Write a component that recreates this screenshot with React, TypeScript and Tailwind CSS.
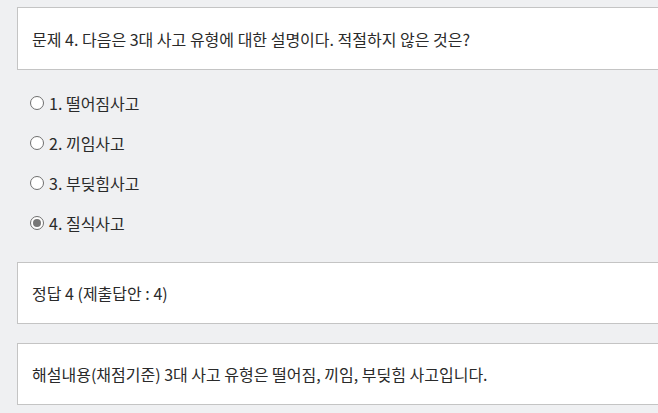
import React from "react";

const font = { fontFamily: '"Noto Sans CJK KR", "Noto Sans", sans-serif' };

function Radio({ checked }: { checked?: boolean }) {
  return (
    <span className="flex h-[14px] w-[14px] items-center justify-center rounded-full border border-[#6f6f6f] bg-white">
      {checked && <span className="h-[8px] w-[8px] rounded-full bg-[#777777]" />}
    </span>
  );
}

export default function App() {
  const options = ["1. 떨어짐사고", "2. 끼임사고", "3. 부딪힘사고", "4. 질식사고"];
  return (
    <div className="h-[413px] w-[658px] overflow-hidden bg-[#eff0f2] pt-[7px] pl-[17px] text-[16px] tracking-[0px] text-[#2a2a2a]" style={font}>
      <div className="flex h-[63px] w-[700px] items-center border border-[#c4c4c4] bg-white pl-[14px]">
        문제 4. 다음은 3대 사고 유형에 대한 설명이다. 적절하지 않은 것은?
      </div>
      <div className="mt-[13px] flex flex-col">
        {options.map((o, i) => (
          <div key={o} className="flex h-[40px] items-center gap-[5px] pl-[13px]">
            <Radio checked={i === 3} />
            <span>{o}</span>
          </div>
        ))}
      </div>
      <div className="mt-[19px] flex h-[62px] w-[700px] items-center border border-[#c4c4c4] bg-white pl-[14px]">
        정답 4 (제출답안 : 4)
      </div>
      <div className="mt-[19px] flex h-[62px] w-[700px] items-center border border-[#c4c4c4] bg-white pl-[14px]">
        해설내용(채점기준) 3대 사고 유형은 떨어짐, 끼임, 부딪힘 사고입니다.
      </div>
    </div>
  );
}
